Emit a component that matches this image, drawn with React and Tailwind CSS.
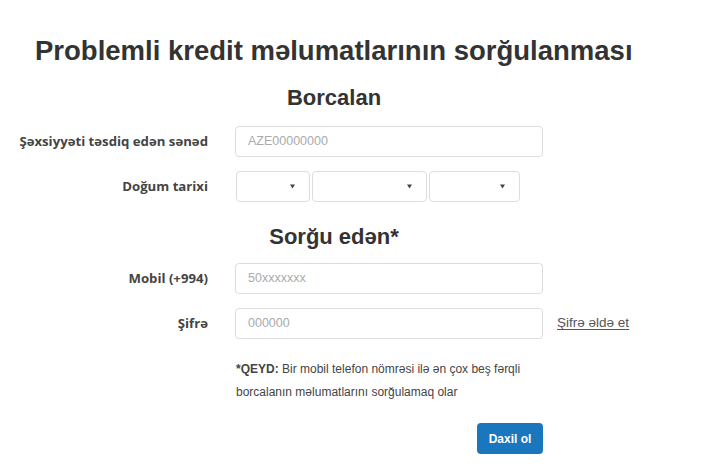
import React from 'react';

const Label = ({ children }) => (
  <div className="w-[208px] text-right font-['Open_Sans',sans-serif] font-bold text-[13.2px] text-[#444]">
    {children}
  </div>
);

const Input = ({ placeholder }) => (
  <div className="w-[308px] h-[31px] border border-[#ddd] rounded-[4px] px-[12px] flex items-center font-['Liberation_Sans',Arial,sans-serif] text-[12.5px] text-[#aaa]">
    {placeholder}
  </div>
);

const Select = ({ width }) => (
  <div className={`${width} h-[31px] border border-[#ddd] rounded-[4px] flex items-center justify-end pr-[14px]`}>
    <svg width="5" height="5" viewBox="0 0 5 5">
      <path d="M0 0.5 L5 0.5 L2.5 4.5 Z" fill="#444" />
    </svg>
  </div>
);

const App = () => {
  return (
    <div className="w-[720px] h-[475px] bg-white overflow-hidden font-['Liberation_Sans',Arial,sans-serif]">
      <h1 className="pt-[35px] pl-[35px] text-[27.5px] leading-[32px] font-bold text-[#333]">
        Problemli kredit məlumatlarının sorğulanması
      </h1>

      <h2 className="ml-[125px] w-[418px] mt-[18px] text-center text-[22px] leading-[26px] font-bold text-[#333]">
        Borcalan
      </h2>

      <div className="flex items-center gap-[27px] mt-[15px]">
        <Label>Şəxsiyyəti təsdiq edən sənəd</Label>
        <Input placeholder="AZE00000000" />
      </div>

      <div className="flex items-center gap-[27px] mt-[14px]">
        <Label>Doğum tarixi</Label>
        <div className="flex gap-[2px] ml-[1px]">
          <Select width="w-[74px]" />
          <Select width="w-[115px]" />
          <Select width="w-[91px]" />
        </div>
      </div>

      <h2 className="ml-[125px] w-[418px] mt-[22px] text-center text-[22px] leading-[26px] font-bold text-[#333]">
        Sorğu edən*
      </h2>

      <div className="flex items-center gap-[27px] mt-[13px]">
        <Label>Mobil (+994)</Label>
        <Input placeholder="50xxxxxxx" />
      </div>

      <div className="flex items-center gap-[27px] mt-[14px]">
        <Label>Şifrə</Label>
        <Input placeholder="000000" />
        <a className="-ml-[13px] text-[13.5px] text-[#555] underline underline-offset-2">Şifrə əldə et</a>
      </div>

      <p className="ml-[236px] mt-[19px] w-[300px] text-[12px] leading-[23px] text-[#444]">
        <b>*QEYD:</b> Bir mobil telefon nömrəsi ilə ən çox beş fərqli borcalanın məlumatlarını sorğulamaq olar
      </p>

      <div className="flex justify-end w-[543px] mt-[19px]">
        <button className="w-[66px] h-[31px] rounded-[4px] bg-[#1a76bd] text-white text-[12px] font-bold">
          Daxil ol
        </button>
      </div>
    </div>
  );
};

export default App;
